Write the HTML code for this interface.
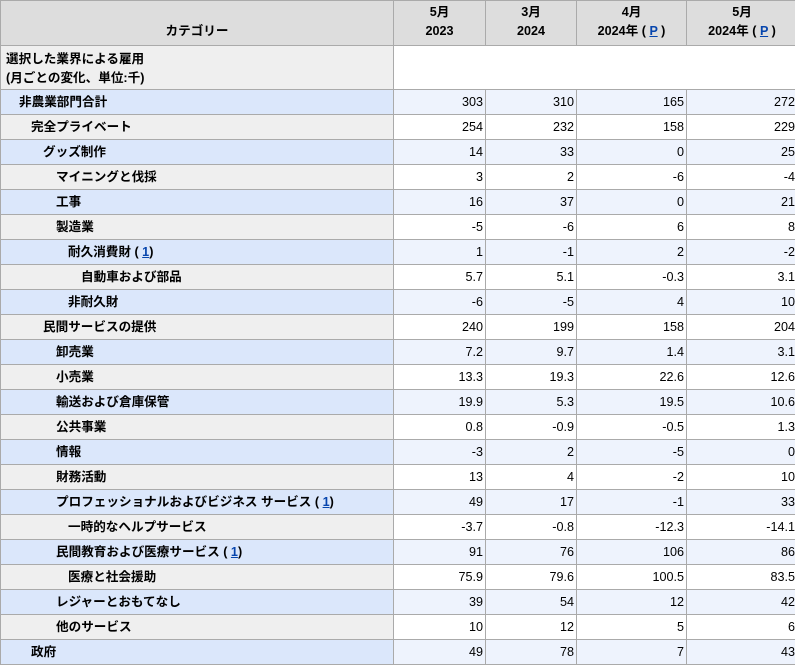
<!DOCTYPE html>
<html><head><meta charset="utf-8"><style>
body{margin:0;width:795px;height:664px;overflow:hidden;background:#fff;font-family:"Liberation Sans","Noto Sans CJK JP",sans-serif;font-size:12.6px;color:#000}
table{border-collapse:collapse;table-layout:fixed;position:absolute;left:0;top:0;width:797px}
td,th{border:1px solid #aaa;padding:0;height:24px;line-height:14px;overflow:hidden;white-space:nowrap}
th{background:#ddd;font-weight:bold;height:40px;vertical-align:bottom;padding-bottom:4px;line-height:19px}
td.l{font-weight:bold}
td.n{text-align:right;padding-right:2px}
tr.b td.l{background:#dbe7fb}
tr.b td.n{background:#eef3fd}
tr.g td.l{background:#efefef}
tr.g td.n{background:#fff}
a{color:#0645ad;text-decoration:underline}
.sec td{height:39px;vertical-align:top;padding-top:4px;line-height:19px}
</style></head><body>
<table>
<colgroup><col style="width:393px"><col style="width:92px"><col style="width:91px"><col style="width:110px"><col style="width:111px"></colgroup>
<tr><th>カテゴリー</th><th>5月<br>2023</th><th>3月<br>2024</th><th>4月<br>2024年 ( <a>P</a> )</th><th>5月<br>2024年 ( <a>P</a> )</th></tr>
<tr class="sec"><td class="l" style="background:#efefef;padding-left:5px">選択した業界による雇用<br>(月ごとの変化、単位:千)</td><td colspan="4" style="background:#fff"></td></tr>
<tr class="b"><td class="l" style="padding-left:18px">非農業部門合計</td><td class="n">303</td><td class="n">310</td><td class="n">165</td><td class="n">272</td></tr>
<tr class="g"><td class="l" style="padding-left:30px">完全プライベート</td><td class="n">254</td><td class="n">232</td><td class="n">158</td><td class="n">229</td></tr>
<tr class="b"><td class="l" style="padding-left:42px">グッズ制作</td><td class="n">14</td><td class="n">33</td><td class="n">0</td><td class="n">25</td></tr>
<tr class="g"><td class="l" style="padding-left:55px">マイニングと伐採</td><td class="n">3</td><td class="n">2</td><td class="n">-6</td><td class="n">-4</td></tr>
<tr class="b"><td class="l" style="padding-left:55px">工事</td><td class="n">16</td><td class="n">37</td><td class="n">0</td><td class="n">21</td></tr>
<tr class="g"><td class="l" style="padding-left:55px">製造業</td><td class="n">-5</td><td class="n">-6</td><td class="n">6</td><td class="n">8</td></tr>
<tr class="b"><td class="l" style="padding-left:67px">耐久消費財 ( <a>1</a>)</td><td class="n">1</td><td class="n">-1</td><td class="n">2</td><td class="n">-2</td></tr>
<tr class="g"><td class="l" style="padding-left:80px">自動車および部品</td><td class="n">5.7</td><td class="n">5.1</td><td class="n">-0.3</td><td class="n">3.1</td></tr>
<tr class="b"><td class="l" style="padding-left:67px">非耐久財</td><td class="n">-6</td><td class="n">-5</td><td class="n">4</td><td class="n">10</td></tr>
<tr class="g"><td class="l" style="padding-left:42px">民間サービスの提供</td><td class="n">240</td><td class="n">199</td><td class="n">158</td><td class="n">204</td></tr>
<tr class="b"><td class="l" style="padding-left:55px">卸売業</td><td class="n">7.2</td><td class="n">9.7</td><td class="n">1.4</td><td class="n">3.1</td></tr>
<tr class="g"><td class="l" style="padding-left:55px">小売業</td><td class="n">13.3</td><td class="n">19.3</td><td class="n">22.6</td><td class="n">12.6</td></tr>
<tr class="b"><td class="l" style="padding-left:55px">輸送および倉庫保管</td><td class="n">19.9</td><td class="n">5.3</td><td class="n">19.5</td><td class="n">10.6</td></tr>
<tr class="g"><td class="l" style="padding-left:55px">公共事業</td><td class="n">0.8</td><td class="n">-0.9</td><td class="n">-0.5</td><td class="n">1.3</td></tr>
<tr class="b"><td class="l" style="padding-left:55px">情報</td><td class="n">-3</td><td class="n">2</td><td class="n">-5</td><td class="n">0</td></tr>
<tr class="g"><td class="l" style="padding-left:55px">財務活動</td><td class="n">13</td><td class="n">4</td><td class="n">-2</td><td class="n">10</td></tr>
<tr class="b"><td class="l" style="padding-left:55px">プロフェッショナルおよびビジネス サービス ( <a>1</a>)</td><td class="n">49</td><td class="n">17</td><td class="n">-1</td><td class="n">33</td></tr>
<tr class="g"><td class="l" style="padding-left:67px">一時的なヘルプサービス</td><td class="n">-3.7</td><td class="n">-0.8</td><td class="n">-12.3</td><td class="n">-14.1</td></tr>
<tr class="b"><td class="l" style="padding-left:55px">民間教育および医療サービス ( <a>1</a>)</td><td class="n">91</td><td class="n">76</td><td class="n">106</td><td class="n">86</td></tr>
<tr class="g"><td class="l" style="padding-left:67px">医療と社会援助</td><td class="n">75.9</td><td class="n">79.6</td><td class="n">100.5</td><td class="n">83.5</td></tr>
<tr class="b"><td class="l" style="padding-left:55px">レジャーとおもてなし</td><td class="n">39</td><td class="n">54</td><td class="n">12</td><td class="n">42</td></tr>
<tr class="g"><td class="l" style="padding-left:55px">他のサービス</td><td class="n">10</td><td class="n">12</td><td class="n">5</td><td class="n">6</td></tr>
<tr class="b"><td class="l" style="padding-left:30px">政府</td><td class="n">49</td><td class="n">78</td><td class="n">7</td><td class="n">43</td></tr>
</table>
</body></html>
